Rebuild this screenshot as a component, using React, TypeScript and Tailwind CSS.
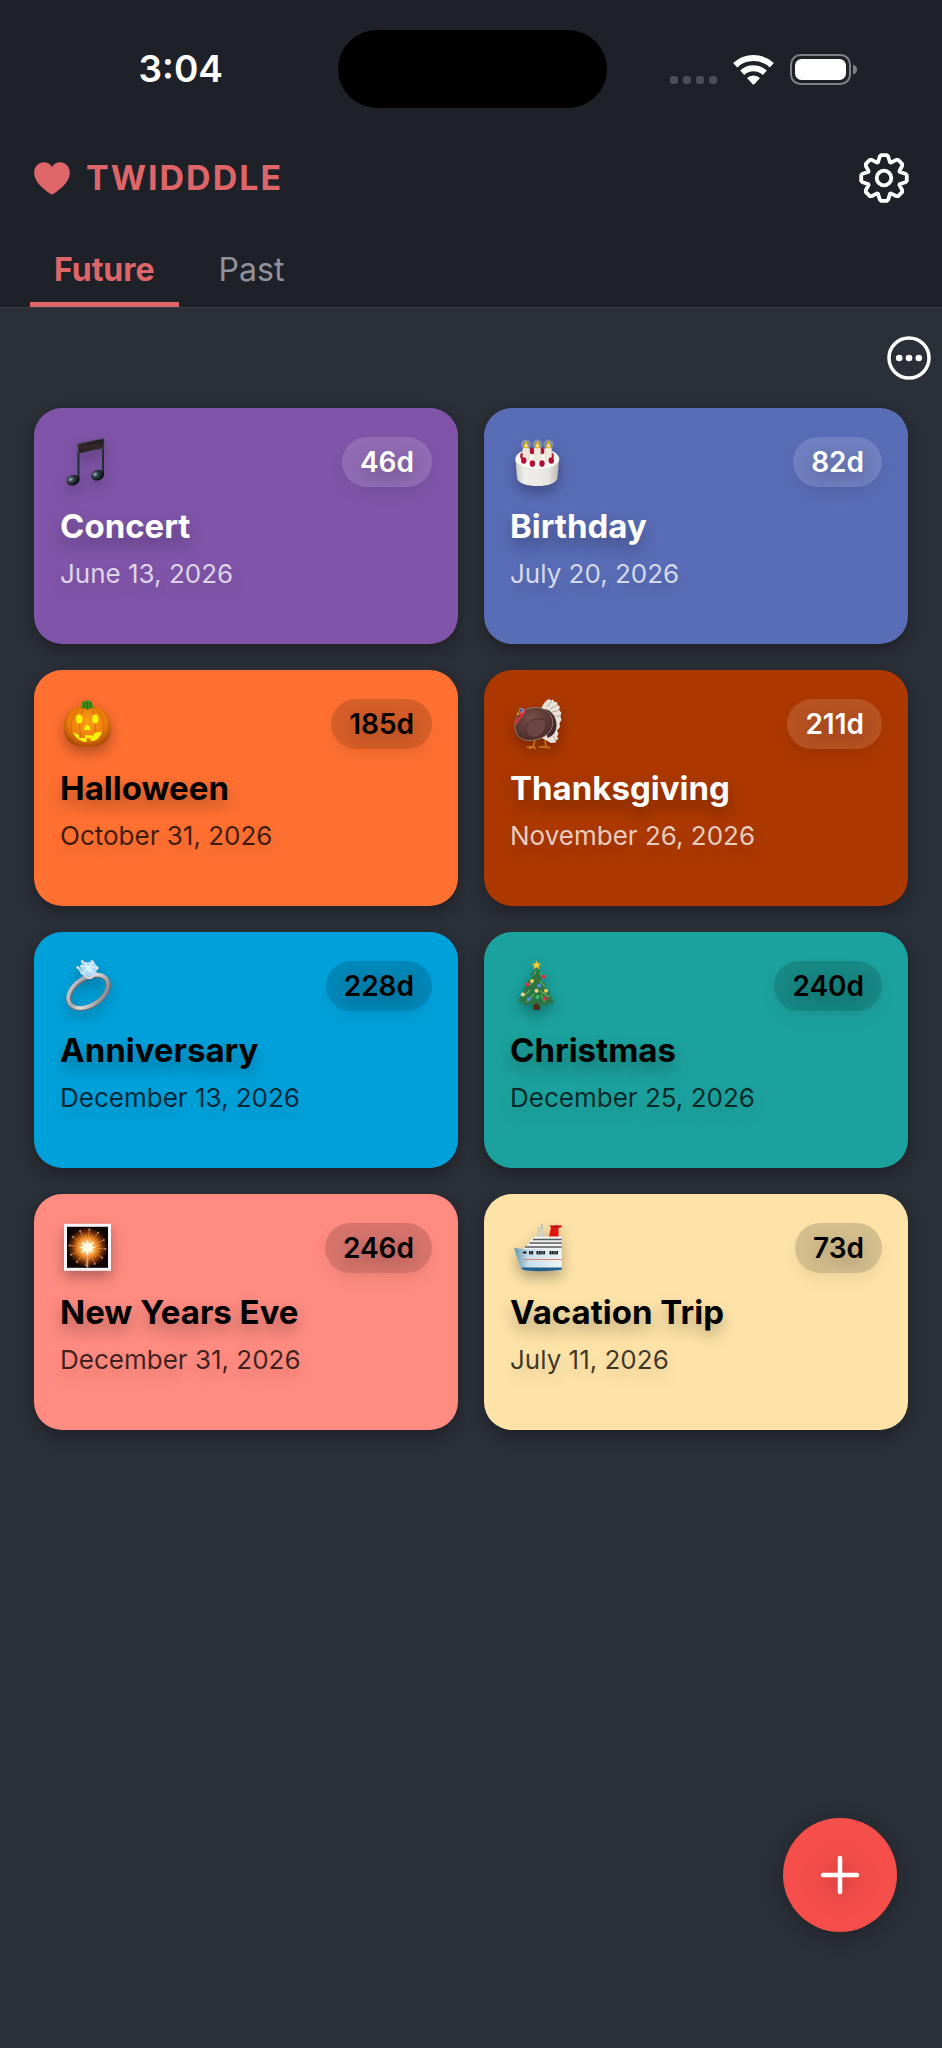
import type { ReactNode } from 'react'
import clsx from 'clsx'

type Evento = {
  title: string
  date: string
  days: string
  icon: ReactNode
  color: string
  dark?: boolean
}

function EmojiBox({ children }: { children: ReactNode }) {
  return (
    <svg
      viewBox="0 0 56 50"
      aria-hidden="true"
      className="h-[50px] w-14 shrink-0 overflow-visible drop-shadow-[0_6px_7px_rgba(0,0,0,0.3)]"
    >
      {children}
    </svg>
  )
}

function MusicEmoji() {
  return (
    <EmojiBox>
      <defs>
        <linearGradient id="beam" x1="0" y1="0" x2="0" y2="1">
          <stop offset="0" stopColor="#15191b" />
          <stop offset="0.5" stopColor="#35282a" />
          <stop offset="1" stopColor="#2a1d20" />
        </linearGradient>
        <radialGradient id="note" cx="0.35" cy="0.35" r="0.65">
          <stop offset="0" stopColor="#a9bac0" />
          <stop offset="0.35" stopColor="#35464c" />
          <stop offset="1" stopColor="#080c0e" />
        </radialGradient>
      </defs>
      <path d="M18.5 14V43M43 9V37" stroke="#202f32" strokeWidth="2" />
      <path d="M17.6 7 44 1.6V11.5L36 12.5 18.6 16.6Z" fill="url(#beam)" stroke="#3d5053" strokeWidth="0.7" />
      <ellipse cx="13" cy="43.2" rx="6.7" ry="5.2" transform="rotate(-18 13 43.2)" fill="url(#note)" />
      <ellipse cx="37.5" cy="38.2" rx="6.7" ry="5.2" transform="rotate(-18 37.5 38.2)" fill="url(#note)" />
    </EmojiBox>
  )
}

const velas = [16, 27.5, 38.5]
const cerejas = [
  [12.5, 19],
  [22, 14],
  [32, 14],
  [41.5, 19],
  [13.8, 23.5],
  [22.4, 26.6],
  [32, 26.6],
  [41.3, 23.5],
]

function CakeEmoji() {
  return (
    <EmojiBox>
      <defs>
        <linearGradient id="cake" x1="0" x2="1">
          <stop offset="0" stopColor="#c9c6bf" />
          <stop offset="0.2" stopColor="#efeeea" />
          <stop offset="0.75" stopColor="#e8e6e1" />
          <stop offset="1" stopColor="#b9b5ab" />
        </linearGradient>
      </defs>
      <path d="M5.5 22 7 41C8 46.5 17 49 27.5 49S46 46.5 47.5 41L49 22Z" fill="url(#cake)" />
      <ellipse cx="27.3" cy="22" rx="21.8" ry="10.6" fill="#f8f7f4" stroke="#dedbd3" strokeWidth="0.6" />
      {cerejas.slice(0, 4).map(([x, y]) => (
        <ellipse key={`${x}-${y}`} cx={x} cy={y} rx="2.3" ry="3.2" fill="#b30f35" />
      ))}
      {velas.map((x) => (
        <g key={x}>
          <circle cx={x} cy="7.5" r="5" fill="#f3f0a0" opacity="0.3" />
          <rect x={x - 3.2} y="10.5" width="6.4" height="13" rx="2" fill="#efeadb" stroke="#cfc9b5" strokeWidth="0.5" />
          <path d={`M${x} 3.5q4.5 8 0 8q-4.5 0 0-8Z`} fill="#e9b80e" />
          <circle cx={x} cy="8.8" r="1.2" fill="#fff9c9" />
        </g>
      ))}
      {cerejas.slice(4).map(([x, y]) => (
        <ellipse key={`${x}-${y}`} cx={x} cy={y} rx="2.7" ry="3.3" fill="#b30f35" />
      ))}
    </EmojiBox>
  )
}

function PumpkinEmoji() {
  return (
    <EmojiBox>
      <defs>
        <radialGradient id="pumpkin" cx="0.5" cy="0.4" r="0.6">
          <stop offset="0" stopColor="#ff9d18" />
          <stop offset="0.65" stopColor="#ec7d0b" />
          <stop offset="1" stopColor="#a94808" />
        </radialGradient>
      </defs>
      <path d="M27 7.5C15 4 4 14 4 28.5S14 48 27.5 48 51 43 51 28.5 39 4 27 7.5Z" fill="url(#pumpkin)" />
      <g fill="none" stroke="#c9610a" strokeWidth="1.2" opacity="0.6">
        <ellipse cx="27.5" cy="27.5" rx="8" ry="20" />
        <ellipse cx="27.5" cy="27.5" rx="16.5" ry="20" />
      </g>
      <path d="M20 9c2-1 2.5-3 2-6 4-2 7-2 10-.5 0 3 .5 5 3 7-4-2-6 1-8 1.5-2-2-4-2.5-7-2Z" fill="#3f8a1c" />
      <path d="M24 3.5v5M27.5 3v7M30.5 3.5v5" stroke="#2a6412" strokeWidth="0.8" />
      <g fill="#fbf00b">
        <ellipse cx="19.2" cy="20" rx="3.3" ry="4.5" />
        <ellipse cx="35.2" cy="20" rx="3.3" ry="4.5" />
        <path d="M27.2 25.5c1.5 0 3.5 3.5 3.2 5.5h-6.6c0-2 2-5.5 3.4-5.5Z" />
        <path d="M13 33l6 3v3h6v-3l9 .5v-2.5l7.7-1.5c-1 5-4 8-7.7 9.5h-3.5v-2.8h-4V43C20 43 15 38.5 13 33Z" />
      </g>
    </EmojiBox>
  )
}

function TurkeyEmoji() {
  return (
    <EmojiBox>
      <defs>
        <radialGradient id="turkey" cx="0.45" cy="0.35" r="0.7">
          <stop offset="0" stopColor="#79504a" />
          <stop offset="1" stopColor="#492a27" />
        </radialGradient>
      </defs>
      <path
        d="M31 10c2-5 5-9 8-10l2 1.5L43 .5l1.5 2.5L47 3l.5 3L50 7.5 49 10.5 51.5 14l-1.2 3 1.2 4-2 3 .5 4-3 3.5 1.5 3.5-1.5 2.5 1.5 2.5-3 1.5.5 2-5 .5-11-6 15-15Z"
        fill="#e9e2d8"
      />
      <path d="M37 8l5-6M40 10l7-4M42 13l8-2M44 17h7M43 37l4 5" stroke="#a69488" strokeWidth="0.8" />
      <path d="M32 10c8-1 14 7 14.5 15 .3 7-3 12-9 14Z" fill="#46292a" />
      <path d="M5 24C6 13 17 8 27 8.5c12 .8 18 11 15 20C39 37 28 42 18 41.5 9 41 4 34 5 24Z" fill="url(#turkey)" stroke="#98867d" strokeWidth="0.8" />
      <path d="M16 30c0-9 10-12 19-9 3 6-1 15-9 17-6 1-10-3-10-8Z" fill="#6a4743" stroke="#462b2a" strokeWidth="0.8" />
      <path d="M5.5 27c-2-4 2-7 4-10 1-3-.5-6 3-7.5 3-.5 3.5 3 2.5 5-2 3-7 8-9.5 12.5Z" fill="#d2323d" />
      <circle cx="11.5" cy="11.5" r="2.4" fill="#8397cf" />
      <circle cx="11.2" cy="11.5" r="1" fill="#20213a" />
      <path d="M9 12.5l-3 3.5 3-.5Z" fill="#dda52d" />
      <path d="M25 41.5 23 48h-6.5M23 48l3 1.5M35 41.5l1 6.5h-7M36 48l4 1M23 48l-4 1.5" fill="none" stroke="#c57d1c" strokeWidth="1.5" />
    </EmojiBox>
  )
}

function RingEmoji() {
  return (
    <EmojiBox>
      <defs>
        <linearGradient id="band" x1="0" y1="0" x2="1" y2="1">
          <stop offset="0" stopColor="#d5d7da" />
          <stop offset="0.3" stopColor="#a6a8ad" />
          <stop offset="0.5" stopColor="#dcdcde" />
          <stop offset="1" stopColor="#6e7076" />
        </linearGradient>
      </defs>
      <ellipse cx="28.6" cy="31" rx="22" ry="13.5" transform="rotate(-33 28.6 31)" fill="none" stroke="#696b71" strokeWidth="5" />
      <ellipse cx="28.2" cy="30.3" rx="22" ry="13.8" transform="rotate(-33 28.2 30.3)" fill="none" stroke="url(#band)" strokeWidth="3.6" />
      <path d="M21.5 12l6.5 5h3l6-5M19 7l3 6M36.5 7l-2 6" fill="none" stroke="#d7d9de" strokeWidth="2" />
      <path d="M20 5l4-4h10l3.5 5-3 6.5-5.5 3-6-2.5Z" fill="#a9d8fb" />
      <path d="M24 1l4 5 6-5M20 5l8 1 9.5 0M28 6l-5 7M28 6l6 6.5" fill="none" stroke="#e6f6ff" strokeWidth="1.2" />
      <path d="M25 8l4-3 4 4-3 3Z" fill="#d8f1ff" />
      <g fill="#dfe1e6">
        <circle cx="22.3" cy="0.5" r="1.5" />
        <circle cx="32" cy="0.5" r="1.5" />
        <circle cx="17.8" cy="6.5" r="1.5" />
        <circle cx="37.3" cy="7" r="1.5" />
      </g>
    </EmojiBox>
  )
}

const bolas: [number, number, string][] = [
  [33.5, 15.8, '#d8304f'],
  [22, 20, '#f5c945'],
  [17.5, 23.5, '#d8304f'],
  [29.2, 24.7, '#4f8fd8'],
  [26.5, 29.8, '#f0cf8a'],
  [36, 29.8, '#f5c945'],
  [12.8, 33.5, '#f0cf8a'],
  [19, 38, '#4f8fd8'],
  [27.5, 36, '#35bf62'],
  [35, 37.5, '#d8304f'],
]

function TreeEmoji() {
  return (
    <EmojiBox>
      <path d="M23 40h7v8.5q-3.5 1-7 0Z" fill="#552b18" />
      <path
        d="M26.5 5 21 14l1.5 1-5 6 1.5 1.5-6 6.5 1.5 1.5L7.3 40.5l4-.5-1 3.5 5-1.5v3.5l5-3 2 3 4-3.5 4 3.5 3-3 4 3 1-3.5 4.5 1.5-1-3L45 41.5 40 35l-.5-3-4-5.5 1-1.5-5-6 1-3Z"
        fill="#2d7442"
      />
      <path d="M26 9l-2 5M30 12l3 5M24 19l-4 5M30 20l5 6M20 29l-6 6M30 30l9 6M24 33l-7 8M31 34l4 7" stroke="#56a65c" strokeWidth="1.6" />
      {bolas.map(([x, y, cor]) => (
        <circle key={`${x}-${y}`} cx={x} cy={y} r="2" fill={cor} />
      ))}
      <path d="M26.5-.2l1.2 2.9 3.1.2-2.4 2 .8 3-2.7-1.6-2.7 1.6.8-3-2.4-2 3.1-.2Z" fill="#fbd12c" stroke="#e0a31c" strokeWidth="0.5" />
    </EmojiBox>
  )
}

const raios = Array.from({ length: 24 }, (_, i) => {
  const a = (i * Math.PI) / 12 + 0.1
  const r = i % 2 === 0 ? 18 : 13
  return { x: 27.5 + Math.cos(a) * r, y: 24.3 + Math.sin(a) * r }
})

function FireworksEmoji() {
  return (
    <EmojiBox>
      <defs>
        <radialGradient id="spark">
          <stop offset="0" stopColor="#fffdf0" />
          <stop offset="0.25" stopColor="#ffe69a" />
          <stop offset="0.48" stopColor="#ef8319" />
          <stop offset="0.78" stopColor="#6b2b08" />
          <stop offset="1" stopColor="#120704" />
        </radialGradient>
      </defs>
      <rect x="4" y="0.8" width="47" height="47" fill="#f6f4f8" />
      <rect x="7" y="3.8" width="41" height="41" fill="#0d0605" />
      <circle cx="27.5" cy="24.3" r="20" fill="url(#spark)" />
      {raios.map(({ x, y }) => (
        <path key={x + y} d={`M27.5 24.3L${x} ${y}`} stroke="#f0a25a" strokeWidth="0.7" opacity="0.85" />
      ))}
      {raios.filter((_, i) => i % 2 === 0).map(({ x, y }) => (
        <circle key={x + y} cx={x} cy={y} r="1" fill="#cf8068" />
      ))}
      <path d="M27.5 26v18.8" stroke="#d3a58c" strokeWidth="1.6" />
      <path d="M27.5 16.5l1.8 4.6 4.7-2.3-2.3 4.3 4 1.3-4.2 1.7 2 4-4.2-2-1.8 5-2-5-4.2 2 2-4-4-1.7 4.3-1.3-2.3-4.3 4.4 2.3Z" fill="#fffbe2" />
    </EmojiBox>
  )
}

function ShipEmoji() {
  return (
    <EmojiBox>
      <defs>
        <linearGradient id="hull" x1="0" x2="1">
          <stop offset="0" stopColor="#5b93ad" />
          <stop offset="0.3" stopColor="#c7dde8" />
          <stop offset="1" stopColor="#eef3f7" />
        </linearGradient>
      </defs>
      <path d="M41 4l-2-1.5 12.5-.2v2l-3 1V14H39Z" fill="#e21211" />
      <path d="M39 4l8-1.5v1.5Z" fill="#8f0d0d" />
      <path d="M28 13l1.5-6-2-2 3.5.5 1-4.5.8 5-1.8 3 3 4Z" fill="#d9dde0" stroke="#a3a8ac" strokeWidth="0.6" />
      <path d="M25 13.5h26.7V26H13l4-3.5 3-5Z" fill="#f1f1ef" />
      <path d="M23 16.5h28.7M19.5 20h32.2M15 24h36.7" stroke="#55585c" strokeWidth="1.3" />
      <path d="M4 25l10 1h37.7v21.5L16 48c-3-.5-5-2-6-5Z" fill="url(#hull)" />
      <path d="M11 44.5h40.7V47c-12 1.3-25 1.5-36 .5-2-.5-4-1.5-4.7-3Z" fill="#245f8a" />
      <path d="M13 36.5h38.7" stroke="#e0807c" strokeWidth="1" />
      <g fill="#16191c">
        <rect x="13" y="28.5" width="3.5" height="2" />
        <rect x="19" y="28" width="4.2" height="3.4" />
        <rect x="26.5" y="28" width="8.5" height="3.4" />
        <rect x="39.5" y="28" width="8.5" height="3.4" />
      </g>
      <path d="M21 28v3.4M28.7 28v3.4M31 28v3.4M33 28v3.4M41.7 28v3.4M44 28v3.4M46 28v3.4" stroke="#dfe8ed" strokeWidth="0.5" />
    </EmojiBox>
  )
}

const eventos: Evento[] = [
  { title: 'Concert', date: 'June 13, 2026', days: '46d', icon: <MusicEmoji />, color: 'bg-[#8055a9]' },
  { title: 'Birthday', date: 'July 20, 2026', days: '82d', icon: <CakeEmoji />, color: 'bg-[#596cb6]' },
  { title: 'Halloween', date: 'October 31, 2026', days: '185d', icon: <PumpkinEmoji />, color: 'bg-[#ff7031]', dark: true },
  { title: 'Thanksgiving', date: 'November 26, 2026', days: '211d', icon: <TurkeyEmoji />, color: 'bg-[#ac3800]' },
  { title: 'Anniversary', date: 'December 13, 2026', days: '228d', icon: <RingEmoji />, color: 'bg-[#00a1db]', dark: true },
  { title: 'Christmas', date: 'December 25, 2026', days: '240d', icon: <TreeEmoji />, color: 'bg-[#1ca29e]', dark: true },
  { title: 'New Years Eve', date: 'December 31, 2026', days: '246d', icon: <FireworksEmoji />, color: 'bg-[#ff8b81]', dark: true },
  { title: 'Vacation Trip', date: 'July 11, 2026', days: '73d', icon: <ShipEmoji />, color: 'bg-[#fde3a8]', dark: true },
]

function EventCard({ title, date, days, icon, color, dark }: Evento) {
  return (
    <li
      className={clsx(
        'h-[236px] rounded-[28px] px-[26px] pt-[29px] shadow-[0_6px_16px_rgba(0,0,0,0.3)]',
        color,
        dark ? 'text-black' : 'text-white',
      )}
    >
      <div className="flex items-center justify-between">
        {icon}
        <span
          className={clsx(
            'flex h-[50px] items-center rounded-full px-[18px] text-[28px] font-semibold shadow-[0_8px_16px_rgba(0,0,0,0.06)] [text-shadow:0_6px_16px_rgba(0,0,0,0.25)]',
            dark ? 'bg-black/16' : 'bg-white/13',
          )}
        >
          {days}
        </span>
      </div>
      <h2 className="mt-[19px] text-[33px] leading-10 font-bold [text-shadow:0_8px_16px_rgba(0,0,0,0.3)]">{title}</h2>
      <p
        className={clsx(
          'mt-3 text-[26px] leading-8 [text-shadow:0_8px_16px_rgba(0,0,0,0.15)]',
          dark ? 'text-black/75' : 'text-white/75',
        )}
      >
        {date}
      </p>
    </li>
  )
}

function StatusBar() {
  return (
    <div className="flex h-[138px] items-center">
      <div className="flex flex-1 justify-center pl-6 text-[37px] font-semibold">3:04</div>
      <div className="h-[78px] w-[269px] rounded-full bg-black" />
      <div className="flex flex-1 items-center justify-center gap-4 pr-[22px]">
        <div className="flex gap-[5px] pt-[21px]">
          {[0, 1, 2, 3].map((i) => (
            <span key={i} className="size-2 rounded-[3px] bg-[#4c4d55]" />
          ))}
        </div>
        <svg viewBox="0 0 41 31" aria-hidden="true" className="h-[31px] w-[41px]">
          <g fill="none" stroke="white" strokeWidth="6">
            <path d="M2.2 11.2a27 27 0 0 1 36.6 0" />
            <path d="M9.2 18.7a16.6 16.6 0 0 1 22.6 0" />
          </g>
          <path d="M14 24a9.5 9.5 0 0 1 13 0l-5.7 6.2q-.8.8-1.6 0Z" fill="white" />
        </svg>
        <svg viewBox="0 0 67 31" aria-hidden="true" className="h-[31px] w-[67px]">
          <rect x="1" y="1" width="59" height="29" rx="9.5" fill="none" stroke="#818287" strokeWidth="2" />
          <rect x="5" y="5" width="51" height="21" rx="6.5" fill="white" />
          <path d="M63 10.5q4 1.5 4 5t-4 5Z" fill="#818287" />
        </svg>
      </div>
    </div>
  )
}

// contorno da engrenagem: oito dentes em volta do centro
const dentes = Array.from({ length: 8 }, (_, i) => {
  const a = (i * Math.PI) / 4
  return [[-6, -15.8], [-4.2, -21.5], [-2.8, -22.8], [2.8, -22.8], [4.2, -21.5], [6, -15.8]]
    .map(([x, y]) => `${x * Math.cos(a) - y * Math.sin(a)} ${x * Math.sin(a) + y * Math.cos(a)}`)
    .join('L')
}).join('L')

function GearIcon() {
  return (
    <svg viewBox="-25 -25 50 50" aria-hidden="true" className="size-[50px]" fill="none" stroke="currentColor" strokeWidth="3.8" strokeLinejoin="round">
      <path d={`M${dentes}Z`} />
      <circle r="7.3" />
    </svg>
  )
}

export default function App() {
  return (
    <div className="min-h-screen bg-[#2b2f37] font-['Inter',sans-serif] text-white">
      <header className="border-b border-[#363a42] bg-[#1f2129]">
        <StatusBar />
        <div className="flex h-20 items-center justify-between pr-[33px] pl-[34px]">
          <div className="flex items-center gap-4 text-[#df6668]">
            <svg viewBox="0 0 36 33" aria-hidden="true" className="h-[33px] w-9" fill="currentColor">
              <path d="M18 32.7C12 29 .2 20.8.2 10.7.2 4.5 4.5.3 9.8.3 13.5.3 16.5 2 18 5 19.5 2 22.5.3 26.2.3c5.3 0 9.6 4.2 9.6 10.4C35.8 20.8 24 29 18 32.7Z" />
            </svg>
            <h1 className="text-[34px] leading-10 font-bold tracking-[2px]">TWIDDDLE</h1>
          </div>
          <button type="button" aria-label="Settings">
            <GearIcon />
          </button>
        </div>
        <nav className="mt-[19px] flex gap-4 px-[30px] text-[32px]">
          <button type="button" aria-current="page" className="h-[70px] border-b-[5px] border-[#df6668] px-6 font-bold text-[#df6668]">
            Future
          </button>
          <button type="button" className="h-[70px] border-b-[5px] border-transparent px-6 text-[#91929d]">
            Past
          </button>
        </nav>
      </header>

      <main>
        <div className="flex h-[100px] items-center justify-end px-[11px]">
          <button type="button" aria-label="More options">
            <svg viewBox="0 0 44 44" aria-hidden="true" className="size-11" fill="white">
              <circle cx="22" cy="22" r="20" fill="none" stroke="white" strokeWidth="3.5" />
              <circle cx="12.2" cy="22" r="3.3" />
              <circle cx="22" cy="22" r="3.3" />
              <circle cx="31.8" cy="22" r="3.3" />
            </svg>
          </button>
        </div>
        <ul className="grid grid-cols-2 gap-x-[26px] gap-y-[26px] px-[34px] pb-[240px]">
          {eventos.map((evento) => (
            <EventCard key={evento.title} {...evento} />
          ))}
        </ul>
      </main>

      <button
        type="button"
        aria-label="Add event"
        className="fixed right-[45px] bottom-[116px] flex size-[114px] items-center justify-center rounded-full bg-[#f64e4a] shadow-[0_4px_20px_rgba(0,0,0,0.25)]"
      >
        <svg viewBox="0 0 40 40" aria-hidden="true" className="size-10 overflow-visible drop-shadow-[0_4px_12px_rgba(0,0,0,0.35)]">
          <path d="M20 3v34M3 20h34" stroke="white" strokeWidth="4.5" strokeLinecap="round" />
        </svg>
      </button>
    </div>
  )
}
